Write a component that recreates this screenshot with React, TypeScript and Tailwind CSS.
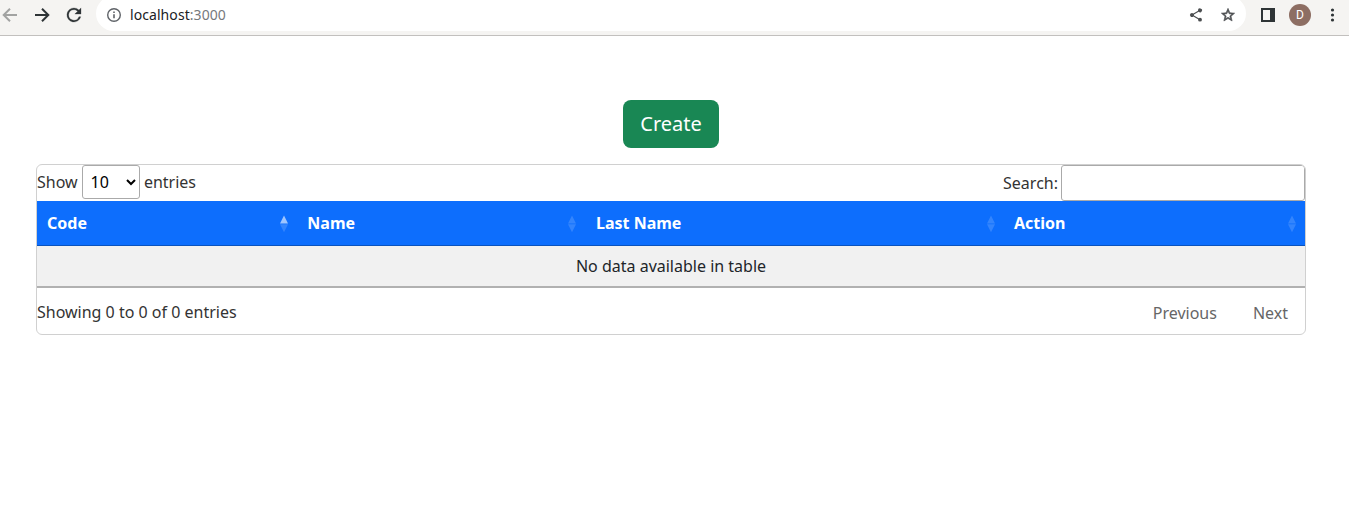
import React from 'react';

type Column = { label: string; width: string; sorted?: boolean };

const columns: Column[] = [
  { label: 'Code', width: 'w-[260.3px] pr-[9.3px]', sorted: true },
  { label: 'Name', width: 'w-[288.7px] pr-[9.5px]' },
  { label: 'Last Name', width: 'w-[418px] pr-[9px]' },
  { label: 'Action', width: 'w-[301px] pr-[9.5px]' },
];

function SortIcon({ sorted }: { sorted?: boolean }) {
  return (
    <svg className="mt-[2px] h-[18px] w-2" viewBox="0 0 8 18" fill="#fff">
      <path d="M4 0.6L8 8.5H0z" opacity={sorted ? 0.6 : 0.16} />
      <path d="M0 9.3H8L4 17.2z" opacity={0.16} />
    </svg>
  );
}

function BrowserBar() {
  return (
    <header className="flex h-9 items-start border-b border-[#c2c0be] bg-[#f5f4f2] text-[#2e3436]">
      <div className="flex h-[30px] w-24 shrink-0 items-center">
        <svg className="h-5 w-5 shrink-0 text-[#a2a3a2]" viewBox="0 0 20 20" fill="none" stroke="currentColor" strokeWidth="2">
          <path d="M17 10H4.5M10 3.7L3.7 10l6.3 6.3" />
        </svg>
        <svg className="ml-3 h-5 w-5 shrink-0" viewBox="0 0 20 20" fill="none" stroke="currentColor" strokeWidth="2">
          <path d="M3 10h12.5M10 3.7l6.3 6.3-6.3 6.3" />
        </svg>
        <svg className="ml-[10px] h-6 w-6 shrink-0" viewBox="0 0 24 24" fill="currentColor" stroke="currentColor" strokeWidth=".3">
          <path d="M17.65 6.35A7.96 7.96 0 0 0 12 4a8 8 0 1 0 7.73 10h-2.08A6 6 0 1 1 12 6c1.66 0 3.14.69 4.22 1.78L13 11h7V4z" transform="translate(1.4 1.4) scale(.88)" />
        </svg>
      </div>
      <div className="-mt-1 flex h-[35px] w-[1150px] shrink-0 items-center rounded-full bg-white pt-[3px] pl-[10px]">
        <svg className="h-4 w-4" viewBox="0 0 16 16" fill="none" stroke="#5f6368" strokeWidth="1.4">
          <circle cx="8" cy="8" r="6.3" />
          <path d="M8 7.2v4M8 4.4v1.5" strokeWidth="1.6" />
        </svg>
        <span className="ml-2 -mt-px text-[14px] leading-5 tracking-[0.07px] text-[#202124]">
          localhost<span className="text-[#76797c]">:3000</span>
        </span>
        <svg className="ml-auto h-4 w-4" viewBox="0 0 24 24" fill="#4b4e50">
          <path d="M18 16.08c-.76 0-1.44.3-1.96.77L8.91 12.7a3.3 3.3 0 0 0 0-1.4l7.05-4.11A3 3 0 1 0 15 5c0 .24.04.47.09.7L8.04 9.81a3 3 0 1 0 0 4.38l7.12 4.16c-.05.21-.08.43-.08.65A2.92 2.92 0 1 0 18 16.08z" />
        </svg>
        <svg className="mr-[10px] ml-4 h-4 w-4" viewBox="0 0 24 24" fill="#4b4e50">
          <path d="M22 9.24l-7.19-.62L12 2 9.19 8.63 2 9.24l5.46 4.73L5.82 21 12 17.27 18.18 21l-1.63-7.03L22 9.24zM12 15.4l-3.76 2.27 1-4.28-3.32-2.88 4.38-.38L12 6.1l1.71 4.04 4.38.38-3.32 2.88 1 4.28L12 15.4z" stroke="#4b4e50" strokeWidth=".9" />
        </svg>
      </div>
      <div className="flex h-[30px] flex-1 items-center pl-[15px]">
        <svg className="h-[14px] w-[14px]" viewBox="0 0 14 14" fill="currentColor">
          <path d="M0 0h14v14H0zM2 2v10h7V2z" fillRule="evenodd" />
        </svg>
        <span className="ml-[14px] flex h-[22px] w-[22px] items-center justify-center rounded-full bg-[#8d6e63] font-['Roboto',sans-serif] text-[12px] leading-none text-white">
          D
        </span>
        <svg className="ml-[19px] h-[14px] w-[5px]" viewBox="0 0 5 14" fill="currentColor">
          <circle cx="2.5" cy="2" r="1.6" />
          <circle cx="2.5" cy="7" r="1.6" />
          <circle cx="2.5" cy="12" r="1.6" />
        </svg>
      </div>
    </header>
  );
}

export default function App() {
  return (
    <div className="h-screen overflow-hidden bg-white font-['Noto_Sans',sans-serif] text-base text-[#333]">
      <BrowserBar />
      <main className="pt-16 pr-[43px] pl-9">
        <button className="mx-auto block h-12 w-24 rounded-lg bg-[#198754] text-center text-[20px] leading-[30px] text-white">
          Create
        </button>
        <section className="mt-4 h-[171px] overflow-hidden rounded-md border border-[#d0d0d0]">
          <div className="flex h-9 items-start justify-between">
            <label className="flex items-center leading-[34px]">
              Show
              <span className="relative mx-1 flex">
                <select className="h-[34px] w-[58px] appearance-none rounded-[3px] border border-[#aaa] bg-transparent pt-0 pb-0 pl-2 leading-[29px] text-black">
                  <option>10</option>
                </select>
                <svg className="pointer-events-none absolute top-[14px] right-1 h-[7px] w-[10px]" viewBox="0 0 10 7" fill="none" stroke="#000" strokeWidth="2">
                  <path d="M1 1l4 4 4-4" />
                </svg>
              </span>
              <span className="pl-[0.3px]">entries</span>
            </label>
            <label className="flex items-center leading-9">
              Search:
              <input className="ml-[3px] h-9 w-[244px] rounded-[3px] border border-[#aaa] bg-transparent px-1" />
            </label>
          </div>
          <table className="w-full table-fixed border-separate border-spacing-0">
            <thead>
              <tr className="h-[45px] bg-[#0d6efd] text-left text-white">
                {columns.map((c) => (
                  <th key={c.label} className={`${c.width} border-b border-[#0a53be] py-0 pl-[10px] font-bold`}>
                    <div className="flex h-6 items-center justify-between leading-6">
                      {c.label}
                      <SortIcon sorted={c.sorted} />
                    </div>
                  </th>
                ))}
              </tr>
            </thead>
            <tbody>
              <tr className="h-[42px] bg-[#f1f1f1] text-center text-[#212529]">
                <td colSpan={4} className="border-b-2 border-[#b1b1b1] p-0">
                  No data available in table
                </td>
              </tr>
            </tbody>
          </table>
          <div className="flex items-start justify-between">
            <div className="pt-3 leading-6">Showing 0 to 0 of 0 entries</div>
            <nav className="flex gap-9 pt-[13px] pr-[17px] leading-6 text-[#666]">
              <span>Previous</span>
              <span>Next</span>
            </nav>
          </div>
        </section>
      </main>
    </div>
  );
}
